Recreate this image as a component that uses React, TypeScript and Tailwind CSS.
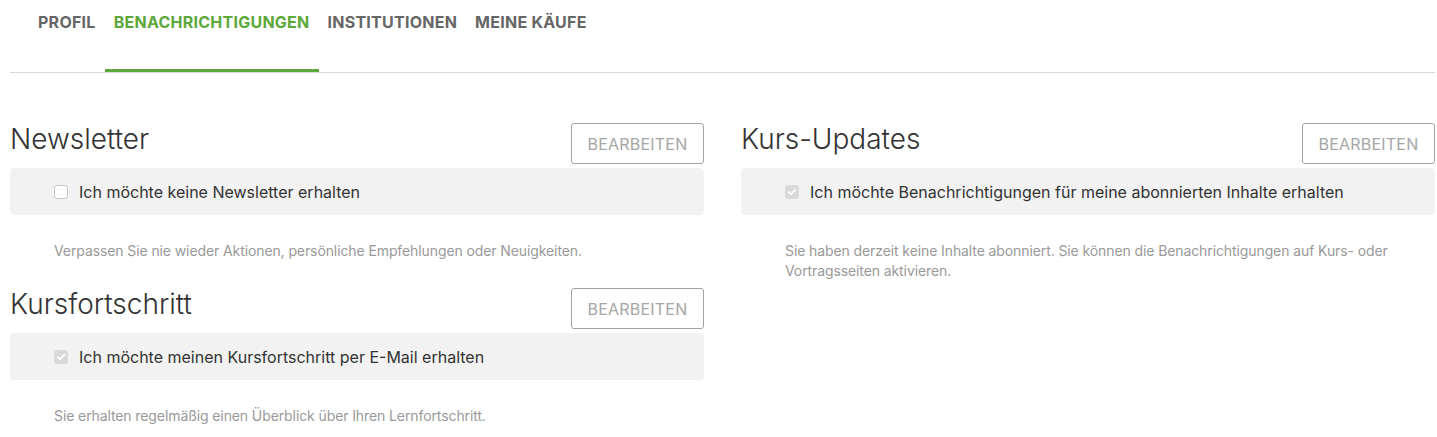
import React from "react";

const tabs = ["Profil", "Benachrichtigungen", "Institutionen", "Meine Käufe"];

function Check({ checked }: { checked: boolean }) {
  if (!checked) {
    return <span className="inline-block w-[14px] h-[14px] rounded-[3px] border border-[#c8c8c8] bg-white shrink-0" />;
  }
  return (
    <span className="inline-flex items-center justify-center w-[14px] h-[14px] rounded-[3px] bg-[#d9d9d9] shrink-0">
      <svg width="10" height="10" viewBox="0 0 10 10" fill="none">
        <path d="M1.8 5.2 L4 7.3 L8.3 2.6" stroke="#fff" strokeWidth="1.8" strokeLinecap="round" strokeLinejoin="round" />
      </svg>
    </span>
  );
}

interface Section {
  title: string;
  label: string;
  checked: boolean;
  note: string;
}

function SettingBlock({ s }: { s: Section }) {
  return (
    <div className="flex flex-col">
      <div className="flex items-center justify-between h-[41px]">
        <h2 className="-mt-[10px] text-[28px] font-light text-[#333] leading-none">{s.title}</h2>
        <button className="h-[41px] w-[133px] border border-[#a3a3a3] rounded-[3px] text-[16px] tracking-[0.2px] text-[#a6a6a6] bg-white">
          BEARBEITEN
        </button>
      </div>
      <div className="mt-[4px] h-[47px] bg-[#f2f2f2] rounded-[4px] flex items-center pl-[44px] gap-[11px]">
        <Check checked={s.checked} />
        <span className="text-[16px] text-[#333]">{s.label}</span>
      </div>
      <p className="pl-[44px] mt-[26px] text-[14px] leading-[20px] text-[#999] pr-[20px] tracking-[-0.1px]">{s.note}</p>
    </div>
  );
}

const left: Section[] = [
  {
    title: "Newsletter",
    label: "Ich möchte keine Newsletter erhalten",
    checked: false,
    note: "Verpassen Sie nie wieder Aktionen, persönliche Empfehlungen oder Neuigkeiten.",
  },
  {
    title: "Kursfortschritt",
    label: "Ich möchte meinen Kursfortschritt per E-Mail erhalten",
    checked: true,
    note: "Sie erhalten regelmäßig einen Überblick über Ihren Lernfortschritt.",
  },
];

const right: Section = {
  title: "Kurs-Updates",
  label: "Ich möchte Benachrichtigungen für meine abonnierten Inhalte erhalten",
  checked: true,
  note: "Sie haben derzeit keine Inhalte abonniert. Sie können die Benachrichtigungen auf Kurs- oder Vortragsseiten aktivieren.",
};

export default function App() {
  return (
    <div className="w-[1437px] h-[437px] bg-white overflow-hidden pl-[10px] pr-[2px] font-['Inter',sans-serif]">
      <nav className="flex h-[73px] border-b border-[#d9d9d9] pl-[19px]">
        {tabs.map((t, i) => (
          <div
            key={t}
            className={`px-[9px] pt-[12px] text-[16px] leading-[20px] font-bold uppercase tracking-[0.25px] ${
              i === 1 ? "text-[#5ca83a] border-b-[3px] border-[#5ca83a]" : "text-[#666]"
            }`}
          >
            {t}
          </div>
        ))}
      </nav>
      <div className="grid grid-cols-2 gap-[37px] pt-[50px]">
        <div className="flex flex-col gap-[27px]">
          {left.map((s) => (
            <SettingBlock key={s.title} s={s} />
          ))}
        </div>
        <div>
          <SettingBlock s={right} />
        </div>
      </div>
    </div>
  );
}
